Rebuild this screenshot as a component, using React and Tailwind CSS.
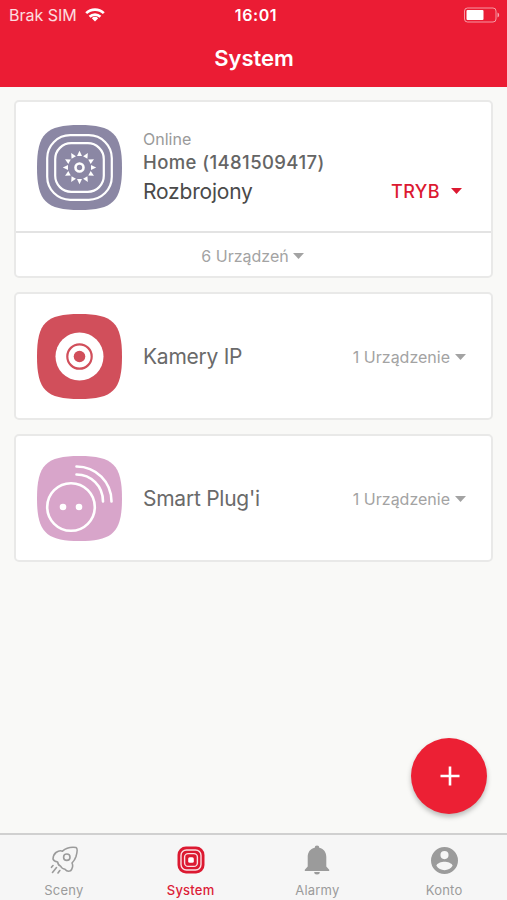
import React from 'react';

const SQUIRCLE =
  'M0 42.5C0 9 9 0 42.5 0S85 9 85 42.5 76 85 42.5 85 0 76 0 42.5Z';

function HomeIcon() {
  const rays = Array.from({ length: 12 }, (_, i) => i * 30);
  return (
    <svg className="h-[85px] w-[85px] shrink-0" viewBox="0 0 85 85" fill="none">
      <path d={SQUIRCLE} fill="#8b87a4" />
      <rect x="10.2" y="10.2" width="64.6" height="64.6" rx="23" stroke="#fff" strokeWidth="2.2" />
      <rect x="18.2" y="18.2" width="48.6" height="48.6" rx="16" stroke="#fff" strokeWidth="2.2" />
      <circle cx="42.5" cy="42.5" r="4" stroke="#fff" strokeWidth="2.6" />
      {rays.map((a) => (
        <path key={a} d="M42.5 25.8l2.5 5.2h-5z" fill="#fff" transform={`rotate(${a} 42.5 42.5)`} />
      ))}
    </svg>
  );
}

function CameraIcon() {
  return (
    <svg className="h-[85px] w-[85px] shrink-0" viewBox="0 0 85 85" fill="none">
      <path d={SQUIRCLE} fill="#d14f5b" />
      <circle cx="42.5" cy="42.5" r="24" fill="#fff" />
      <circle cx="42.5" cy="42.5" r="12.2" stroke="#d14f5b" strokeWidth="2.2" />
      <circle cx="42.5" cy="42.5" r="5.8" fill="#d14f5b" />
    </svg>
  );
}

function PlugIcon() {
  return (
    <svg className="h-[85px] w-[85px] shrink-0" viewBox="0 0 85 85" fill="none">
      <path d={SQUIRCLE} fill="#d8a5ca" />
      <g stroke="#fff" strokeWidth="2.6" strokeLinecap="round">
        <circle cx="34" cy="51" r="23.8" />
        <path d="M39.5 10.5C59 10.5 74.5 26 74.5 45.5" />
        <path d="M39.5 18.5C54 18.5 66 30 66 45.5" />
      </g>
      <circle cx="26" cy="51" r="3.3" fill="#fff" />
      <circle cx="42" cy="51" r="3.3" fill="#fff" />
    </svg>
  );
}

function Caret() {
  return (
    <svg width="11" height="6" viewBox="0 0 11 6" fill="currentColor">
      <path d="M0 0h11L5.5 6z" />
    </svg>
  );
}

function StatusBar() {
  return (
    <div className="grid h-[30px] grid-cols-3 items-center pl-[9px] pr-[7px] text-[16px]">
      <div className="flex items-center gap-2 text-white/85">
        <span>Brak SIM</span>
        <svg width="20" height="14" viewBox="0 0 20 14" fill="none" stroke="#fff" strokeWidth="2.6">
          <path d="M1.2 5.2a12.5 12.5 0 0 1 17.6 0" />
          <path d="M4.6 8.8a7.7 7.7 0 0 1 10.8 0" />
          <path d="M10 13.5l-3.2-3.3a4.5 4.5 0 0 1 6.4 0z" fill="#fff" stroke="none" />
        </svg>
      </div>
      <span className="pl-[3px] text-center font-semibold tracking-[0.6px]">16:01</span>
      <svg className="justify-self-end" width="37" height="16" viewBox="0 0 37 16" fill="none">
        <rect x="1.5" y="1" width="31.5" height="14" rx="3" stroke="#fff" strokeOpacity=".55" />
        <rect x="3.5" y="3" width="17" height="10" rx="1" fill="#fff" />
        <path d="M34.5 5.5c2.2.8 2.2 4.2 0 5z" fill="#fff" fillOpacity=".6" />
      </svg>
    </div>
  );
}

function DeviceCard({ icon, name, count }) {
  return (
    <section className="flex h-[128px] items-center rounded-[5px] border-2 border-[#e9e9e8] bg-white pl-[21px] pr-[25px]">
      {icon}
      <h2 className="ml-[21px] flex-1 pt-[2px] text-[21px] tracking-[-0.25px] text-[#6a6a6a]">{name}</h2>
      <button className="flex items-center gap-[5px] pt-[2px] text-[16px] text-[#a3a3a3]">
        {count}
        <Caret />
      </button>
    </section>
  );
}

function RocketIcon() {
  return (
    <svg width="28" height="28" viewBox="0 0 28 28" fill="none" stroke="currentColor" strokeWidth="1.6" strokeLinecap="round" strokeLinejoin="round">
      <path d="M12.5 5.2C16 2 21.5 .9 26 1.5C27.6 2.2 27 7 26 10.5C25 13.5 23.5 15.5 22 17C23.3 19.5 22.5 23 20.5 24.8C18.500 25.6 16.5 25.2 15 23.2C13 23 11.5 22 10.5 20C8.500 19.500 8 18 7.6 16C5.500 15.500 3.500 14.500 3 13C3.200 10.500 4 8 6 6.500C8 5 10.500 4.200 12.500 5.200Z" />
      <circle cx="16.800" cy="11.200" r="3.200" />
      <path d="M3 19.500l-1.500 1.800M6.500 21.500l-4 5M9.800 24.500l-1.800 2.500" />
    </svg>
  );
}

function SystemIcon() {
  return (
    <svg width="28" height="28" viewBox="0 0 28 28" fill="none">
      <rect x=".5" y=".5" width="27" height="27" rx="8.5" fill="#dc1931" />
      <rect x="4" y="4" width="20" height="20" rx="5.5" stroke="#f9dfe2" strokeWidth="1.4" />
      <rect x="7.6" y="7.6" width="12.8" height="12.8" rx="3.5" stroke="#f9dfe2" strokeWidth="1.4" />
      <rect x="11.2" y="11.2" width="5.6" height="5.6" rx="1.5" fill="#fff" />
    </svg>
  );
}

function BellIcon() {
  return (
    <svg width="26" height="30" viewBox="0 0 26 30" fill="currentColor">
      <path d="M10.7 2.8a2.3 2.3 0 0 1 4.6 0C20 4 22.3 7.5 22.3 12v9.500l2.900 3.200v1.300H.8v-1.300l2.900-3.200V12C3.700 7.500 6 4 10.700 2.800zM10.200 27h5.600a2.800 2.500 0 0 1-5.600 0z" />
    </svg>
  );
}

function AccountIcon() {
  return (
    <svg width="27" height="27" viewBox="2 2 20 20" fill="currentColor">
      <path d="M12 2a10 10 0 1 0 0 20 10 10 0 0 0 0-20zm0 3a3 3 0 1 1 0 6 3 3 0 0 1 0-6zm0 14.2a7.2 7.2 0 0 1-6-3.22c.03-1.99 4-3.08 6-3.08s5.970 1.090 6 3.080a7.200 7.200 0 0 1-6 3.220z" />
    </svg>
  );
}

const tabs = [
  { label: 'Sceny', icon: <RocketIcon /> },
  { label: 'System', icon: <SystemIcon />, active: true },
  { label: 'Alarmy', icon: <BellIcon /> },
  { label: 'Konto', icon: <AccountIcon /> },
];

export default function App() {
  return (
    <div className="flex h-[900px] w-full flex-col bg-[#f9f9f7] font-['Inter',sans-serif]">
      <header className="h-[87px] bg-[#eb1c34] text-white">
        <StatusBar />
        <h1 className="mt-[11px] pl-px text-center text-[22px] leading-[34px] font-semibold">System</h1>
      </header>

      <main className="flex flex-1 flex-col gap-[14px] px-[14px] pt-[13px]">
        <section className="rounded-[5px] border-2 border-[#e9e9e8] bg-white">
          <div className="flex h-[131px] items-center border-b-2 border-[#e3e3e3] pt-px pl-[21px] pr-[29px]">
            <HomeIcon />
            <div className="ml-[21px] flex-1 pt-px">
              <p className="text-[16px] leading-[22px] text-[#9a9a9a]">Online</p>
              <p className="text-[18.5px] leading-[25px] font-medium tracking-[0.4px] text-[#656565]">Home (1481509417)</p>
              <div className="flex items-center justify-between leading-[33px]">
                <span className="text-[21px] tracking-[-0.2px] text-[#4a4a4a]">Rozbrojony</span>
                <button className="flex items-center gap-[11px] text-[18px] font-medium tracking-[0.4px] text-[#dc1931]">
                  TRYB
                  <Caret />
                </button>
              </div>
            </div>
          </div>
          <button className="flex h-[43px] w-full items-center justify-center gap-[4px] pt-[2px] pr-[2px] text-[16px] text-[#a3a3a3]">
            6 Urządzeń
            <Caret />
          </button>
        </section>

        <DeviceCard icon={<CameraIcon />} name="Kamery IP" count="1 Urządzenie" />
        <DeviceCard icon={<PlugIcon />} name="Smart Plug'i" count="1 Urządzenie" />

        <button className="mt-auto mr-[6px] mb-[19px] flex size-[76px] items-center justify-center self-end rounded-full bg-[#ec2034] text-white shadow-[0_3px_5px_rgba(0,0,0,0.25)]">
          <svg className="ml-[2px]" width="20" height="20" viewBox="0 0 20 20" stroke="currentColor" strokeWidth="2.6">
            <path d="M10 .5v19M.5 10h19" />
          </svg>
        </button>
      </main>

      <nav className="grid h-[67px] grid-cols-4 border-t-2 border-[#d0d0d0] bg-[#f6f6f6]">
        {tabs.map((tab) => (
          <button
            key={tab.label}
            className={`flex flex-col items-center pl-px text-[13px] tracking-[0.2px] ${tab.active ? 'font-medium text-[#dc1d38]' : 'text-[#9b9b9b]'}`}
          >
            <span className="mt-[10px] flex h-[30px] items-center justify-center">{tab.icon}</span>
            <span className="mt-[7px] leading-4">{tab.label}</span>
          </button>
        ))}
      </nav>
    </div>
  );
}
